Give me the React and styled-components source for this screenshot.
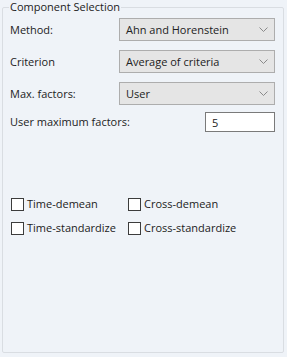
import React from 'react'
import styled, { createGlobalStyle } from 'styled-components'

const Global = createGlobalStyle`
  html, body { margin: 0; padding: 0; }
  body {
    background: #eff3f8;
    font-family: "Open Sans", "Noto Sans", sans-serif;
    font-size: 11px;
    color: #222;
  }
`

const Page = styled.div`
  width: 287px;
  height: 357px;
  box-sizing: border-box;
  padding: 0 3px 4px 2px;
  display: flex;
`

const Group = styled.fieldset`
  flex: 1;
  margin: 0;
  padding: 4px 8px 0 7px;
  border: 1px solid #d9dde2;
  border-radius: 2px;
  display: flex;
  flex-direction: column;
`

const Legend = styled.legend`
  padding: 0 1px;
  margin-left: -1px;
  line-height: 14px;
`

const Form = styled.div`
  display: grid;
  grid-template-columns: 109px 1fr;
  row-gap: 9px;
  align-items: center;
`

const Label = styled.span`
  line-height: 16px;
`

const Combo = styled.div`
  height: 23px;
  box-sizing: border-box;
  border: 1px solid #adadad;
  background: #e5e5e5;
  display: flex;
  align-items: center;
  justify-content: space-between;
  padding: 0 6px 0 6px;
`

const NumRow = styled.div`
  margin-top: 7px;
  display: flex;
  align-items: center;
  justify-content: space-between;
`

const NumInput = styled.div`
  width: 70px;
  height: 20px;
  box-sizing: border-box;
  border: 1px solid #7a7a7a;
  background: #fff;
  padding: 0 6px;
  display: flex;
  align-items: center;
`

const Checks = styled.div`
  margin-top: 65px;
  margin-left: 1px;
  display: grid;
  grid-template-columns: 117px auto;
  row-gap: 10px;
`

const Check = styled.label`
  display: flex;
  align-items: center;
  gap: 3px;
  line-height: 14px;
`

const Box = styled.span`
  width: 13px;
  height: 13px;
  box-sizing: border-box;
  border: 1px solid #3c3c3c;
  background: #fff;
`

const Chevron = () => (
  <svg width="9" height="5" viewBox="0 0 9 5">
    <path d="M0.5 0.5 L4.5 4.5 L8.5 0.5" fill="none" stroke="#8a8a8a" strokeWidth="1" />
  </svg>
)

const rows = [
  ['Method:', 'Ahn and Horenstein'],
  ['Criterion', 'Average of criteria'],
  ['Max. factors:', 'User'],
]

const checks = ['Time-demean', 'Cross-demean', 'Time-standardize', 'Cross-standardize']

export default function App() {
  return (
    <>
      <Global />
      <Page>
        <Group>
          <Legend>Component Selection</Legend>
          <Form>
            {rows.map(([l, v]) => (
              <React.Fragment key={l}>
                <Label>{l}</Label>
                <Combo>
                  <span>{v}</span>
                  <Chevron />
                </Combo>
              </React.Fragment>
            ))}
          </Form>
          <NumRow>
            <Label>User maximum factors:</Label>
            <NumInput>5</NumInput>
          </NumRow>
          <Checks>
            {checks.map(c => (
              <Check key={c}>
                <Box />
                {c}
              </Check>
            ))}
          </Checks>
        </Group>
      </Page>
    </>
  )
}
